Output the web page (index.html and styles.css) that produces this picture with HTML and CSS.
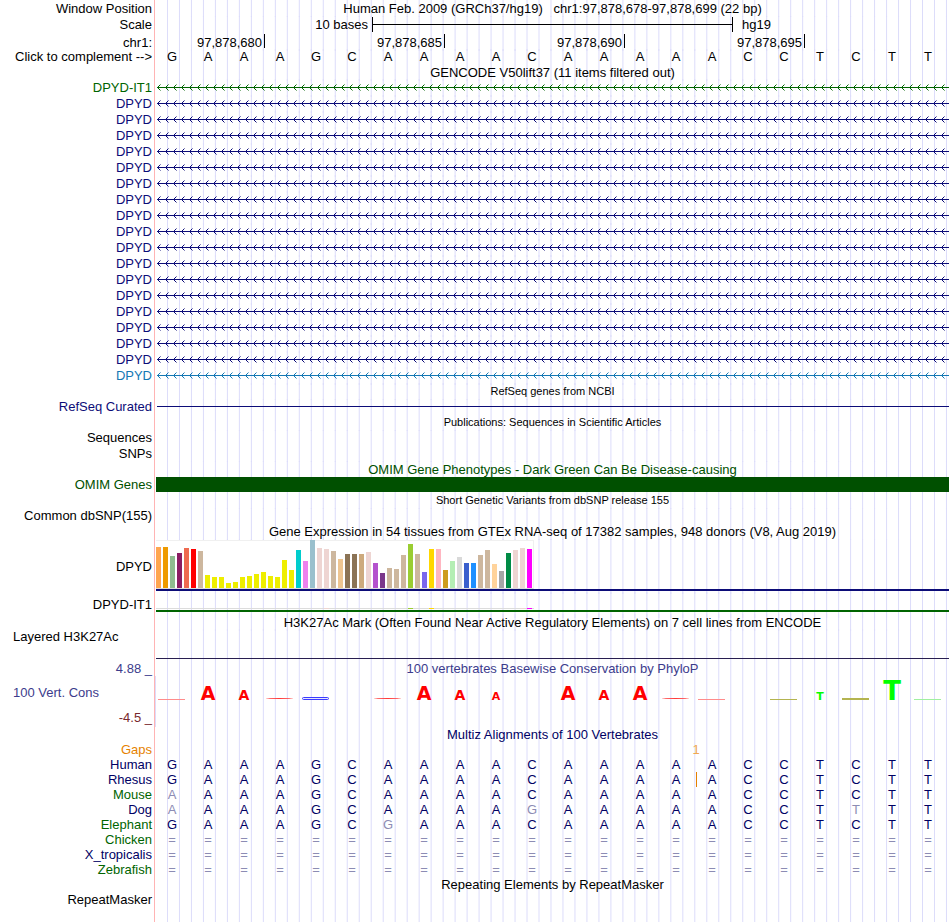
FILE: index.html
```
<!DOCTYPE html>
<html lang="en">
<head>
  <meta charset="UTF-8">
  <title>Human chr1:97,878,678-97,878,699</title>
  <link rel="stylesheet" href="styles.css">
</head>
<body>
  <!-- arrow patterns for the gene lines -->
  <svg class="defs" width="0" height="0" aria-hidden="true">
    <defs>
      <pattern id="arrow-green" width="8" height="7" patternUnits="userSpaceOnUse">
        <path class="arrow green" d="M4.5 .5 L1.5 3.5 L4.5 6.5"/>
      </pattern>
      <pattern id="arrow-navy" width="8" height="7" patternUnits="userSpaceOnUse">
        <path class="arrow navy" d="M4.5 .5 L1.5 3.5 L4.5 6.5"/>
      </pattern>
      <pattern id="arrow-blue" width="8" height="7" patternUnits="userSpaceOnUse">
        <path class="arrow blue" d="M4.5 .5 L1.5 3.5 L4.5 6.5"/>
      </pattern>
    </defs>
  </svg>

  <main class="browser">
    <div class="row tall">
      <div class="label">Window Position</div>
      <div class="track title">Human Feb. 2009 (GRCh37/hg19) &nbsp; chr1:97,878,678-97,878,699 (22 bp)</div>
    </div>
    <div class="row scale-row">
      <div class="label">Scale</div>
      <div class="track columns">
        <span class="scale-size">10 bases</span>
        <span class="scale-bar"></span>
        <span class="scale-db">hg19</span>
      </div>
    </div>
    <div class="row ruler-row">
      <div class="label">chr1:</div>
      <div class="track columns">
        <span class="tick first">97,878,680</span>
        <span class="tick">97,878,685</span>
        <span class="tick">97,878,690</span>
        <span class="tick">97,878,695</span>
      </div>
    </div>
    <div class="row">
      <div class="label"><button type="button" id="complement">Click to complement --&gt;</button></div>
      <div class="track columns bases" id="ruler-bases"></div>
    </div>

    <div class="row">
      <div class="label"></div>
      <div class="track title low">GENCODE V50lift37 (11 items filtered out)</div>
    </div>
    <div id="genes"></div>

    <div class="row tall">
      <div class="label"></div>
      <div class="track title small">RefSeq genes from NCBI</div>
    </div>
    <div class="row">
      <div class="label navy">RefSeq Curated</div>
      <div class="track"><div class="line refseq"></div></div>
    </div>

    <div class="row tall">
      <div class="label"></div>
      <div class="track title small">Publications: Sequences in Scientific Articles</div>
    </div>
    <div class="row">
      <div class="label">Sequences</div>
      <div class="track"></div>
    </div>
    <div class="row tall">
      <div class="label">SNPs</div>
      <div class="track"></div>
    </div>

    <div class="row tall">
      <div class="label"></div>
      <div class="track title low omim">OMIM Gene Phenotypes - Dark Green Can Be Disease-causing</div>
    </div>
    <div class="row">
      <div class="label omim">OMIM Genes</div>
      <div class="track"><div class="omim-bar"></div></div>
    </div>

    <div class="row tall">
      <div class="label"></div>
      <div class="track title small">Short Genetic Variants from dbSNP release 155</div>
    </div>
    <div class="row">
      <div class="label">Common dbSNP(155)</div>
      <div class="track"></div>
    </div>

    <div class="row tall">
      <div class="label"></div>
      <div class="track title low">Gene Expression in 54 tissues from GTEx RNA-seq of 17382 samples, 948 donors (V8, Aug 2019)</div>
    </div>
    <div class="row gtex">
      <div class="label">DPYD</div>
      <div class="track">
        <div class="bars boxed" id="gtex-dpyd"></div>
        <div class="gene-line navy"></div>
      </div>
    </div>
    <div class="row gtex-low">
      <div class="label">DPYD-IT1</div>
      <div class="track">
        <div class="bars" id="gtex-it1"></div>
        <div class="gene-line green"></div>
      </div>
    </div>

    <div class="row">
      <div class="label"></div>
      <div class="track title low">H3K27Ac Mark (Often Found Near Active Regulatory Elements) on 7 cell lines from ENCODE</div>
    </div>
    <div class="row h3k">
      <div class="label left">Layered H3K27Ac</div>
      <div class="track"><div class="line h3k-line"></div></div>
    </div>

    <div class="row">
      <div class="label phylo">4.88 _</div>
      <div class="track title phylo">100 vertebrates Basewise Conservation by PhyloP</div>
    </div>
    <div class="row cons">
      <div class="label">
        <div class="left phylo">100 Vert. Cons</div>
        <div class="phylo-min">-4.5 _</div>
      </div>
      <div class="track columns logo" id="logo"></div>
    </div>

    <div class="row">
      <div class="label"></div>
      <div class="track title multiz">Multiz Alignments of 100 Vertebrates</div>
    </div>
    <div class="row">
      <div class="label gaps">Gaps</div>
      <div class="track columns"><span class="gap-count">1</span></div>
    </div>
    <div id="species"></div>

    <div class="row">
      <div class="label"></div>
      <div class="track title">Repeating Elements by RepeatMasker</div>
    </div>
    <div class="row rest">
      <div class="label">RepeatMasker</div>
      <div class="track"></div>
    </div>
  </main>
  <script src="script.js"></script>
</body>
</html>
```

FILE: styles.css
```
body {
  margin: 0;
  background-color: #fff;
  color: #000;
  font-family: "Liberation Sans", Arial, sans-serif;
  font-size: 13px;
  line-height: 15px;
}

.defs {
  position: absolute;
}

.browser {
  display: flex;
  flex-direction: column;
  min-height: 100vh;
  padding-right: 1px;
  box-sizing: border-box;
}

/* one row = label column + track column */
.row {
  display: grid;
  grid-template-columns: 154px minmax(0, 1fr);
  height: 15px;
}

.row.tall {
  height: 16px;
  line-height: 17px;
}

.row.gene {
  height: 16px;
  line-height: 18px;
}

.row.scale-row {
  height: 18px;
  line-height: 18px;
}

.row.ruler-row {
  line-height: 17px;
}

.label {
  padding-right: 2px;
  text-align: right;
  white-space: nowrap;
}

.left {
  padding-left: 13px;
  text-align: left;
}

.label button {
  padding: 0;
  border: none;
  background: none;
  color: inherit;
  font: inherit;
  cursor: pointer;
}

/* vertical guide lines, three per base */
.track {
  padding-left: 1px;
  border-left: 1px solid #ffb4b4;
  background-image: linear-gradient(to left, #dcdcfa 1px, transparent 1px);
  background-size: calc((100% - 1px) / 66) 100%;
  background-origin: content-box;
  background-clip: content-box;
}

.title {
  text-align: center;
  white-space: nowrap;
}

/* drop the text a little, the guide lines still run full height */
.title.low,
.title.small {
  line-height: 17px;
}

.title.small {
  font-size: 11px;
}

.columns {
  display: grid;
  grid-template-columns: repeat(22, calc((100% - 1px) / 22));
}

/* colours */
.navy { color: #0c0c78; }
.green { color: #006400; }
.blue { color: #1478b4; }
.omim { color: #005000; }
.phylo { color: #3c3c8c; }
.phylo-min { color: #78282d; }
.multiz { color: #000064; }
.gaps { color: #e68200; }

/* scale and ruler */
.scale-size {
  grid-column: 1 / 7;
  padding-right: 4px;
  text-align: right;
}

.scale-bar {
  grid-column: 7 / 17;
  height: 15px;
  margin: 1px -1px 0 0;
  border: solid #000;
  border-width: 0 1px;
  background: linear-gradient(#000, #000) center / 100% 1px no-repeat;
  box-sizing: border-box;
}

.scale-db {
  grid-column: 17 / -1;
  padding-left: 10px;
}

.tick {
  grid-column: span 5;
  height: 14px;
  margin-right: -1px;
  padding-right: 2px;
  border-right: 1px solid #000;
  text-align: right;
}

.tick.first {
  grid-column: span 3;
}

/* bases */
.bases span {
  padding-right: 4px;
  text-align: center;
}

.bases .diff {
  color: #8c8cb4;
}

.bases .insert {
  border-right: 1px solid #e68200;
  margin-right: -1px;
}

.gap-count {
  grid-column: 15 / 17;
  color: #f0a850;
  text-align: center;
}

/* genes */
.intron {
  display: block;
  width: 100%;
  height: 7px;
  margin-top: 5px;
}

.arrow {
  fill: none;
  stroke: currentColor;
}

.intron line {
  stroke: currentColor;
}

.line {
  height: 1px;
  margin-left: 1px;
}

.refseq {
  margin-top: 7px;
  background-color: #0c0c78;
}

.omim-bar {
  height: 15px;
  background-color: #005000;
}

/* GTEx expression */
.row.gtex {
  height: 53px;
  line-height: 55px;
}

.row.gtex-low {
  height: 22px;
  line-height: 26px;
}

.bars {
  display: flex;
  align-items: flex-end;
  gap: 2px;
  width: 378px;
  height: 17px;
  border-bottom: 1px solid #dcdcdc;
  box-sizing: border-box;
}

.bars.boxed {
  height: 49px;
  margin-top: 1px;
  border-top: 1px solid #f0f0f0;
  border-right: 1px solid #f0f0f0;
  background-color: #fff;
}

.bars span {
  flex: none;
  width: 5px;
}

#gtex-it1 span {
  margin-bottom: -1px;
}

.gene-line {
  height: 2px;
  background-color: currentColor;
}

.gtex-low .gene-line {
  margin-top: 1px;
}

/* H3K27Ac */
.row.h3k {
  height: 32px;
}

.h3k-line {
  margin: 29px 0 0;
  background-color: #281e50;
}

/* conservation */
.row.cons {
  height: 51px;
}

.cons .label {
  display: flex;
  flex-direction: column;
  justify-content: space-between;
  padding-top: 9px;
  padding-bottom: 2px;
}

.logo {
  align-content: start;
  align-items: baseline;
  padding-top: 2px;
  background-clip: padding-box;
  background-origin: content-box;
}

.logo span {
  padding-right: 4px;
  font-family: "DejaVu Sans", sans-serif;
  font-weight: bold;
  text-align: center;
}

.logo .h14 { font-size: 19px; line-height: 19px; }
.logo .h10 { font-size: 14px; line-height: 14px; }
.logo .h8 { font-size: 11px; line-height: 11px; }
.logo .h19 { font-size: 26px; line-height: 26px; }

.logo .A { color: #f00; }
.logo .T { color: #0f0; }

.logo i {
  width: 27px;
  height: 1px;
  margin-left: 2px;
  background-color: currentColor;
}

.logo .red { color: #ff8c8c; }
.logo .lime { color: #a0f0a0; }
.logo .olive { color: #b4b450; }

.logo .below {
  height: 2px;
  margin-bottom: -3px;
}

.logo .arc {
  height: 2px;
  border-top: 1px solid #ff3c3c;
  border-radius: 50%;
  background: none;
  box-sizing: border-box;
}

.logo .flat {
  height: 3px;
  border: 1px solid #3c3cff;
  border-radius: 2px;
  background: #e6e6ff;
  box-sizing: border-box;
}

.row.rest {
  flex: 1;
  height: auto;
}
```

FILE: script.js
```
const human = 'GAAAGCAAAACAAAAACCTCTT';

// [name, colour class]
const genes = [['DPYD-IT1', 'green']];
for (let i = 0; i < 17; i++) {
  genes.push(['DPYD', 'navy']);
}
genes.push(['DPYD', 'blue']);

document.getElementById('genes').innerHTML = genes.map(([name, color]) => `
  <div class="row gene ${color}">
    <div class="label">${name}</div>
    <div class="track">
      <svg class="intron" aria-hidden="true">
        <line x1="1" y1="3.5" x2="100%" y2="3.5"/>
        <rect width="100%" height="7" fill="url(#arrow-${color})"/>
      </svg>
    </div>
  </div>`).join('');

// Bases along the ruler
const rulerBases = document.getElementById('ruler-bases');

function showBases(seq) {
  rulerBases.innerHTML = seq.split('').map(base => `<span>${base}</span>`).join('');
}

let complemented = false;
const pairs = { A: 'T', T: 'A', C: 'G', G: 'C' };

document.getElementById('complement').addEventListener('click', function() {
  complemented = !complemented;
  showBases(complemented ? human.replace(/./g, base => pairs[base]) : human);
});

showBases(human);

// GTEx: [colour, height] for each of the 54 tissues
const tissues = [
  ['#ffa54f', 41], ['#ee9a00', 41], ['#8fbc8f', 32], ['#8b1c62', 35], ['#ee6a50', 40], ['#ff0000', 39],
  ['#cdb79e', 37], ['#eeee00', 13], ['#eeee00', 11], ['#eeee00', 11], ['#eeee00', 5], ['#eeee00', 6],
  ['#eeee00', 11], ['#eeee00', 12], ['#eeee00', 14], ['#eeee00', 16], ['#eeee00', 12], ['#eeee00', 11],
  ['#eeee00', 28], ['#eeee00', 18], ['#00cdcd', 38], ['#ee82ee', 27], ['#9ac0cd', 48], ['#eed5d2', 40],
  ['#eed5d2', 39], ['#cdb79e', 37], ['#eec591', 29], ['#8b7355', 34], ['#8b7355', 34], ['#cdaa7d', 34],
  ['#eed5d2', 36], ['#b452cd', 25], ['#7a378b', 15], ['#cdb79e', 20], ['#cdb79e', 19], ['#cdb79e', 33],
  ['#9acd32', 44], ['#cdb79e', 34], ['#7a67ee', 16], ['#ffd700', 39], ['#ffb6c1', 39], ['#cd9b1d', 18],
  ['#b4eeb4', 27], ['#d9d9d9', 31], ['#3a5fcd', 25], ['#1e90ff', 25], ['#cdb79e', 33], ['#cdb79e', 38],
  ['#ffd39b', 24], ['#a6a6a6', 17], ['#008b45', 35], ['#eed5d2', 38], ['#eed5d2', 40], ['#ff00ff', 39]
];

// tissues where DPYD-IT1 is seen at all
const detected = [24, 36, 39, 52, 53];

function bar(color, height) {
  return `<span style="height: ${height}px; background-color: ${color}"></span>`;
}

document.getElementById('gtex-dpyd').innerHTML =
  tissues.map(([color, height]) => bar(color, height)).join('');
document.getElementById('gtex-it1').innerHTML =
  tissues.map(([color], i) => bar(color, detected.includes(i) ? 1 : 0)).join('');

// PhyloP logo, one entry per base
const logo = [
  '<i class="red"></i>',
  '<span class="A h14">A</span>',
  '<span class="A h10">A</span>',
  '<i class="arc"></i>',
  '<i class="flat"></i>',
  '<span></span>',
  '<i class="arc"></i>',
  '<span class="A h14">A</span>',
  '<span class="A h10">A</span>',
  '<span class="A h8">A</span>',
  '<span></span>',
  '<span class="A h14">A</span>',
  '<span class="A h10">A</span>',
  '<span class="A h14">A</span>',
  '<i class="arc"></i>',
  '<i class="red"></i>',
  '<span></span>',
  '<i class="olive"></i>',
  '<span class="T h8">T</span>',
  '<i class="olive below"></i>',
  '<span class="T h19">T</span>',
  '<i class="lime"></i>'
];
document.getElementById('logo').innerHTML = logo.join('');

// Multiz alignments
const none = '='.repeat(22);
const species = [
  ['Human', 'multiz', human],
  ['Rhesus', 'multiz', human],
  ['Mouse', 'green', 'AAAAGCAAAACAAAAACCTCTT'],
  ['Dog', 'multiz', 'AAAAGCAAAAGAAAAACCTTTT'],
  ['Elephant', 'green', 'GAAAGCGAAACAAAAACCTCTT'],
  ['Chicken', 'green', none],
  ['X_tropicalis', 'multiz', none],
  ['Zebrafish', 'green', none]
];

document.getElementById('species').innerHTML = species.map(([name, color, seq]) => {
  const cells = seq.split('').map((base, i) => {
    const classes = [];
    if (base !== human[i]) classes.push('diff');
    if (name === 'Rhesus' && i === 14) classes.push('insert');
    return `<span class="${classes.join(' ')}">${base}</span>`;
  });
  return `
  <div class="row">
    <div class="label ${color}">${name}</div>
    <div class="track columns bases multiz">${cells.join('')}</div>
  </div>`;
}).join('');
```
